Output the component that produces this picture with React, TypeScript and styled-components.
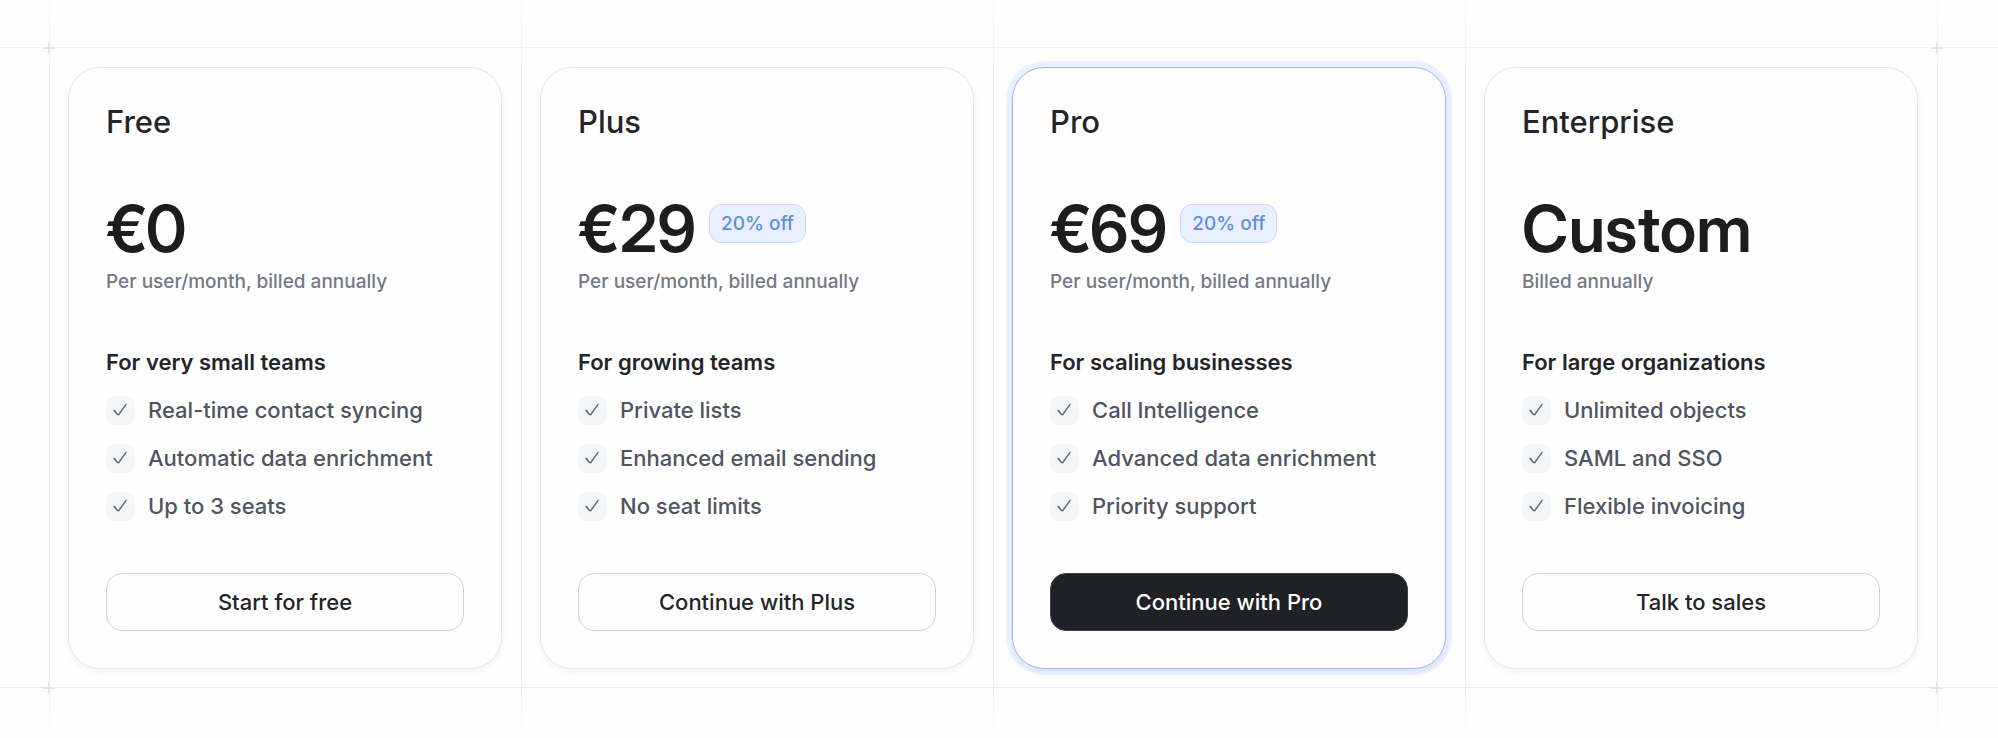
import React from 'react';
import styled, { createGlobalStyle, css } from 'styled-components';

const GlobalStyle = createGlobalStyle`
  *, *::before, *::after { box-sizing: border-box; }
  body {
    margin: 0;
    background: #fefefe;
    color: #232529;
    font-family: Inter, "Liberation Sans", sans-serif;
    -webkit-font-smoothing: antialiased;
  }
  h2, h3, p, ul { margin: 0; padding: 0; }
`;

const Section = styled.main`
  position: relative;
  padding: 0 60px 0 49px;
  background:
    linear-gradient(#f1f2f3, #f1f2f3) 0 47px / 100% 1px no-repeat,
    linear-gradient(#e9eaeb, #e9eaeb) 0 calc(100% - 50px) / 100% 1px no-repeat;
`;

const fadingLine = 'linear-gradient(#f8f9f9, #ecedef 72px, #ecedef calc(100% - 50px), #eeeff100)';

const Grid = styled.div`
  display: grid;
  grid-template-columns: repeat(4, minmax(0, 1fr));
  padding-right: 1px;
  background: ${fadingLine} 100% 0 / 1px 100% no-repeat;
`;

const Column = styled.div`
  display: flex;
  padding: 67px 19px 69px;
  background: ${fadingLine} 0 0 / 1px 100% no-repeat;
`;

const Card = styled.article<{ $featured?: boolean }>`
  flex: 1;
  min-width: 0;
  display: flex;
  flex-direction: column;
  padding: 37px;
  border: 1px solid #e6e7ea;
  border-radius: 32px;
  background: #fefefe;
  box-shadow: 0 3px 6px rgba(28, 40, 64, 0.05);
  ${(p) =>
    p.$featured &&
    css`
      border-color: #9db7ec;
      box-shadow: 0 3px 6px rgba(64, 110, 220, 0.1), 0 0 0 6px #ecf1fd;
    `}
`;

const PlanName = styled.h2`
  font-size: 31px;
  line-height: 34px;
  font-weight: 500;
`;

const PriceRow = styled.div`
  display: flex;
  align-items: flex-start;
  gap: 13px;
  margin-top: 58px;
`;

const Price = styled.p`
  color: #1c1d1f;
  font-family: "Inter Display", Inter, "Liberation Sans", sans-serif;
  font-size: 64px;
  line-height: 64px;
  font-weight: 600;
`;

const Discount = styled.span`
  margin-top: 7px;
  padding: 0 11px;
  border: 1px solid #cbdaf8;
  border-radius: 12px;
  background: #e8effe;
  color: #648ce2;
  font-size: 19px;
  line-height: 37px;
  font-weight: 500;
  white-space: nowrap;
`;

const Billing = styled.p`
  margin-top: 7px;
  color: #757984;
  font-size: 19px;
  line-height: 28px;
  font-weight: 500;
`;

const Audience = styled.h3`
  margin-top: 50px;
  font-size: 22px;
  line-height: 32px;
  font-weight: 600;
`;

const Features = styled.ul`
  display: flex;
  flex-direction: column;
  gap: 20px;
  margin-top: 18px;
  list-style: none;
`;

const Feature = styled.li`
  display: flex;
  align-items: center;
  gap: 13px;
  color: #505560;
  font-size: 22px;
  line-height: 28px;
  font-weight: 500;
`;

const Tick = styled.span`
  flex: none;
  display: grid;
  width: 29px;
  height: 29px;
  margin-bottom: -1px;
  border-radius: 9px;
  background: #f4f6f8;
`;

const Action = styled.button<{ $featured?: boolean }>`
  width: 100%;
  height: 58px;
  margin-top: 53px;
  border: 1px solid #d1d3d7;
  border-radius: 16px;
  background: #fefefe;
  color: #232529;
  font: 500 22px/28px Inter, "Liberation Sans", sans-serif;
  cursor: pointer;
  ${(p) =>
    p.$featured &&
    css`
      border-color: #3c3f48;
      background: #202125;
      color: #fefefe;
    `}
`;

const Cross = styled.svg<{ $x: 'left' | 'right'; $y: 'top' | 'bottom' }>`
  position: absolute;
  ${(p) => (p.$x === 'left' ? 'left: 43px;' : 'right: 55px;')}
  ${(p) => (p.$y === 'top' ? 'top: 42px;' : 'bottom: 44px;')}
`;

const corners = [
  ['left', 'top'],
  ['right', 'top'],
  ['left', 'bottom'],
  ['right', 'bottom'],
] as const;

interface Plan {
  name: string;
  price: string;
  discount?: string;
  billing: string;
  audience: string;
  features: string[];
  action: string;
  featured?: boolean;
}

const plans: Plan[] = [
  {
    name: 'Free',
    price: '€0',
    billing: 'Per user/month, billed annually',
    audience: 'For very small teams',
    features: ['Real-time contact syncing', 'Automatic data enrichment', 'Up to 3 seats'],
    action: 'Start for free',
  },
  {
    name: 'Plus',
    price: '€29',
    discount: '20% off',
    billing: 'Per user/month, billed annually',
    audience: 'For growing teams',
    features: ['Private lists', 'Enhanced email sending', 'No seat limits'],
    action: 'Continue with Plus',
  },
  {
    name: 'Pro',
    price: '€69',
    discount: '20% off',
    billing: 'Per user/month, billed annually',
    audience: 'For scaling businesses',
    features: ['Call Intelligence', 'Advanced data enrichment', 'Priority support'],
    action: 'Continue with Pro',
    featured: true,
  },
  {
    name: 'Enterprise',
    price: 'Custom',
    billing: 'Billed annually',
    audience: 'For large organizations',
    features: ['Unlimited objects', 'SAML and SSO', 'Flexible invoicing'],
    action: 'Talk to sales',
  },
];

function Check() {
  return (
    <Tick>
      <svg width="29" height="29" viewBox="0 0 29 29" fill="none" aria-hidden="true">
        <path
          d="M8.3 14.3L10.7 17.8Q12 19.5 13.3 17.9L20 8.4"
          stroke="#666a78"
          strokeWidth="1.6"
          strokeLinecap="round"
          strokeLinejoin="round"
        />
      </svg>
    </Tick>
  );
}

function PlanCard({ plan }: { plan: Plan }) {
  return (
    <Card $featured={plan.featured}>
      <PlanName>{plan.name}</PlanName>
      <PriceRow>
        <Price>{plan.price}</Price>
        {plan.discount && <Discount>{plan.discount}</Discount>}
      </PriceRow>
      <Billing>{plan.billing}</Billing>
      <Audience>{plan.audience}</Audience>
      <Features>
        {plan.features.map((feature) => (
          <Feature key={feature}>
            <Check />
            {feature}
          </Feature>
        ))}
      </Features>
      <Action type="button" $featured={plan.featured}>
        {plan.action}
      </Action>
    </Card>
  );
}

export default function App() {
  return (
    <>
      <GlobalStyle />
      <Section>
        <Grid>
          {plans.map((plan) => (
            <Column key={plan.name}>
              <PlanCard plan={plan} />
            </Column>
          ))}
        </Grid>
        {corners.map(([x, y]) => (
          <Cross key={x + y} $x={x} $y={y} width="12" height="12" viewBox="0 0 12 12" aria-hidden="true">
            <path d="M0 6H12M6 0V12" stroke="#e2e4e9" strokeWidth="2" />
          </Cross>
        ))}
      </Section>
    </>
  );
}
